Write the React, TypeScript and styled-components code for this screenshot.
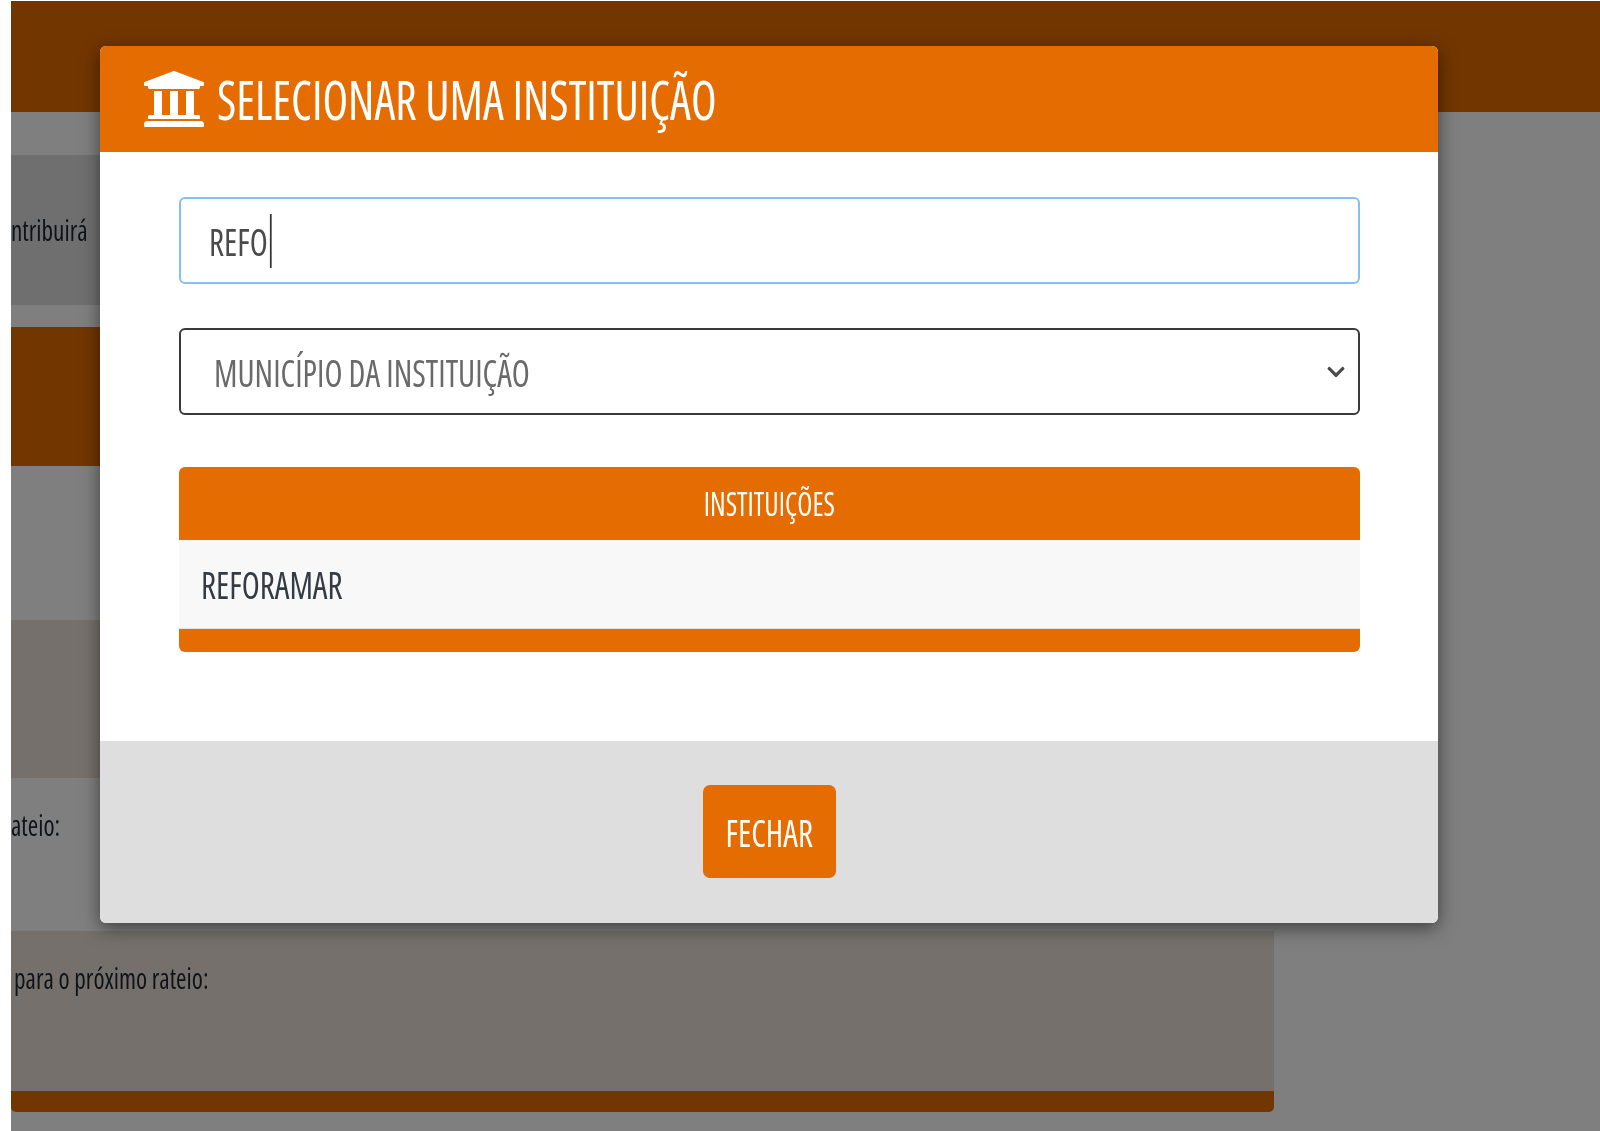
import React from 'react'
import styled, { createGlobalStyle } from 'styled-components'
import { FaUniversity, FaChevronDown } from 'react-icons/fa'

const GlobalStyle = createGlobalStyle`
  html, body { margin: 0; padding: 0; }
  body {
    background: #fff;
    overflow: hidden;
    font-family: "Open Sans", "Liberation Sans", sans-serif;
    font-stretch: 75%;
  }
`

const Screen = styled.div`
  position: relative;
  width: 1600px;
  height: 1131px;
  padding: 1px 0 0 11px;
  box-sizing: border-box;
  overflow: hidden;
  filter: blur(0.5px);
`

const Backdrop = styled.div`
  height: 100%;
  position: relative;
  overflow: hidden;
  background: #fff;
`

const TopBar = styled.div`
  height: 111px;
  background: #e56c00;
`

const Content = styled.div`
  width: 1263px;
  padding-top: 43px;
`

const Intro = styled.div`
  height: 150px;
  margin-bottom: 22px;
  background: #dfdfdf;
  display: flex;
  align-items: center;
`

const PanelHead = styled.div`
  height: 139px;
  background: #e56c00;
`

const Row = styled.div<{ $tinted?: boolean; $height: number }>`
  height: ${p => p.$height}px;
  padding: 27px 0 0 ${p => (p.$tinted ? 3 : 0)}px;
  box-sizing: border-box;
  background: ${p => (p.$tinted ? '#ebe1d7' : '#fff')};
  font-size: 29px;
  line-height: 40px;
  color: #1c2733;
`

const PanelFoot = styled.div`
  height: 21px;
  background: #e56c00;
  border-radius: 0 0 5px 5px;
`

const Squeezed = styled.span<{ $x: number; $origin?: string }>`
  display: inline-block;
  white-space: nowrap;
  transform: scaleX(${p => p.$x});
  transform-origin: ${p => p.$origin || 'left'} center;
`

const Overlay = styled.div`
  position: absolute;
  inset: 1px 0 0 11px;
  background: rgba(0, 0, 0, 0.5);
`

const Modal = styled.div`
  position: absolute;
  left: 89px;
  top: 45px;
  width: 1338px;
  border-radius: 6px;
  overflow: hidden;
  background: #fff;
  box-shadow: 0 5px 18px rgba(0, 0, 0, 0.5);
`

const ModalHeader = styled.div`
  height: 106px;
  padding-left: 42px;
  display: flex;
  align-items: center;
  gap: 11px;
  background: #e56c00;
  color: #fff;
  svg {
    flex: none;
    width: 64px;
    height: 64px;
  }
`

const Title = styled.div`
  font-size: 54px;
  line-height: 60px;
`

const ModalBody = styled.div`
  padding: 45px 78px 89px 79px;
`

const Field = styled.div<{ $focused?: boolean }>`
  height: 87px;
  box-sizing: border-box;
  display: flex;
  align-items: center;
  justify-content: space-between;
  border-radius: 6px;
  font-size: 38px;
  line-height: 50px;
  padding: 0 12px 0 ${p => (p.$focused ? 28 : 33)}px;
  border: ${p => (p.$focused ? '2px solid #86bff0' : '2px solid #3a3a3a')};
  color: ${p => (p.$focused ? '#4a4a4a' : '#6a6a6a')};
  margin-bottom: ${p => (p.$focused ? 44 : 52)}px;
  svg {
    width: 20px;
    height: 20px;
    color: #4a4a4a;
  }
`

const Typed = styled(Squeezed)`
  position: relative;
  &::after {
    content: '';
    position: absolute;
    left: 100%;
    top: -2px;
    bottom: -2px;
    margin-left: 2px;
    width: 2px;
    background: #333;
  }
`

const ResultTable = styled.div`
  border-radius: 6px;
  overflow: hidden;
  background: #e56c00;
`

const TableHead = styled.div`
  height: 73px;
  display: flex;
  align-items: center;
  justify-content: center;
  color: #fff;
  font-size: 32px;
`

const TableRow = styled.div`
  height: 88px;
  padding-left: 22px;
  display: flex;
  align-items: center;
  background: #f8f8f8;
  border-bottom: 1px solid #e4e4e4;
  font-size: 38px;
  color: #333c44;
`

const TableFoot = styled.div`
  height: 23px;
`

const ModalFooter = styled.div`
  padding: 44px 0 45px;
  display: flex;
  justify-content: center;
  background: #dedede;
`

const CloseButton = styled.div`
  width: 133px;
  height: 93px;
  display: flex;
  align-items: center;
  justify-content: center;
  border-radius: 7px;
  background: #e56c00;
  color: #fff;
  font-size: 38px;
  font-weight: 500;
`

const App = () => {
  return (
    <Screen>
      <GlobalStyle />
      <Backdrop>
        <TopBar />
        <Content>
          <Intro>
            <Row as='div' $height={40} style={{ padding: 0, background: 'none' }}>
              <Squeezed $x={0.87}>ntribuirá</Squeezed>
            </Row>
          </Intro>
          <PanelHead />
          <Row $height={154} />
          <Row $height={158} $tinted />
          <Row $height={153}>
            <Squeezed $x={0.87}>ateio:</Squeezed>
          </Row>
          <Row $height={160} $tinted>
            <Squeezed $x={0.87}>para o próximo rateio:</Squeezed>
          </Row>
          <PanelFoot />
        </Content>
      </Backdrop>
      <Overlay>
        <Modal>
          <ModalHeader>
            <FaUniversity />
            <Title>
              <Squeezed $x={0.87}>SELECIONAR UMA INSTITUIÇÃO</Squeezed>
            </Title>
          </ModalHeader>
          <ModalBody>
            <Field $focused>
              <Typed $x={0.87}>REFO</Typed>
            </Field>
            <Field>
              <Squeezed $x={0.87}>MUNICÍPIO DA INSTITUIÇÃO</Squeezed>
              <FaChevronDown />
            </Field>
            <ResultTable>
              <TableHead>
                <Squeezed $x={0.87} $origin='center'>INSTITUIÇÕES</Squeezed>
              </TableHead>
              <TableRow>
                <Squeezed $x={0.87}>REFORAMAR</Squeezed>
              </TableRow>
              <TableFoot />
            </ResultTable>
          </ModalBody>
          <ModalFooter>
            <CloseButton>
              <Squeezed $x={0.87} $origin='center'>FECHAR</Squeezed>
            </CloseButton>
          </ModalFooter>
        </Modal>
      </Overlay>
    </Screen>
  )
}

export default App
